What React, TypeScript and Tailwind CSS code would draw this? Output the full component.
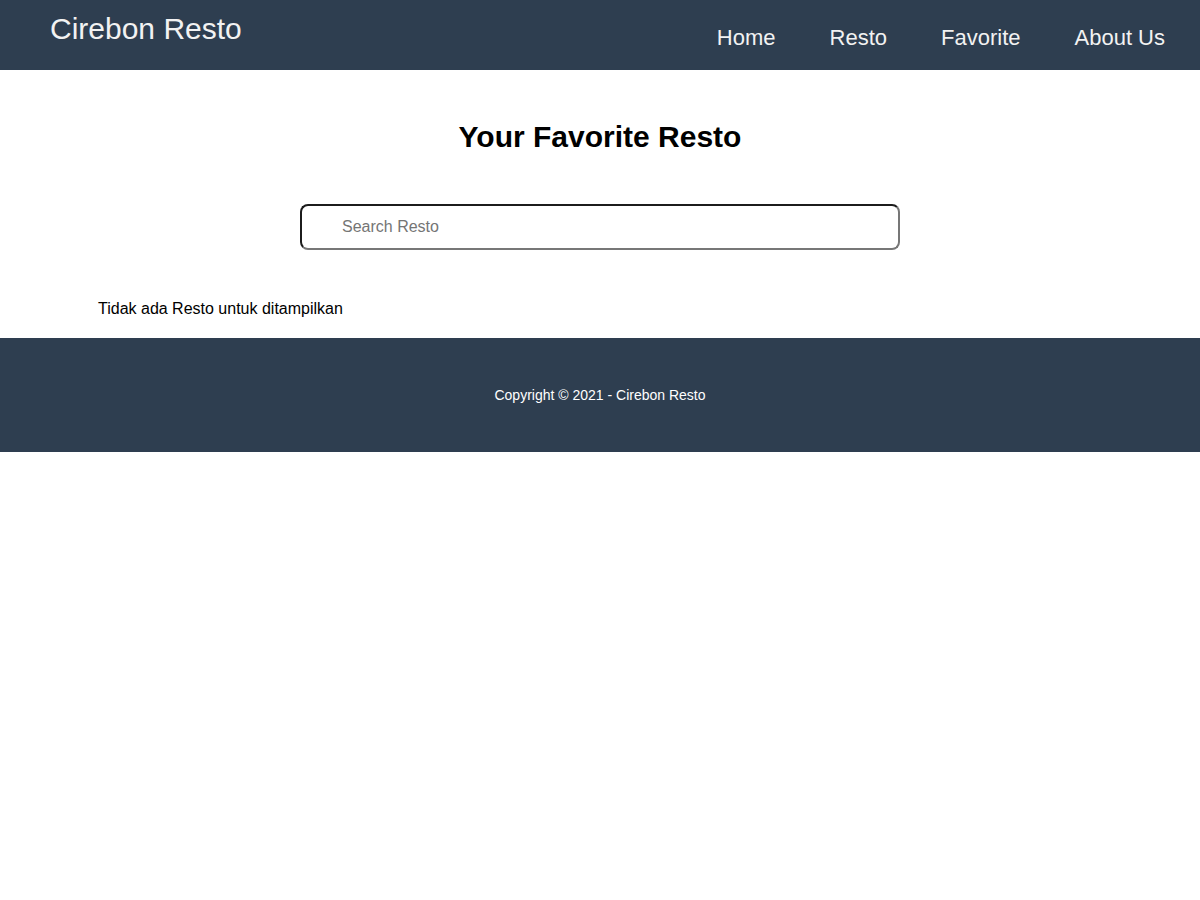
import React, { useState } from 'react';

const navLinks = ['Home', 'Resto', 'Favorite', 'About Us'];

export default function App() {
  const [query, setQuery] = useState('');

  return (
    <div className="min-h-screen bg-white font-['Liberation_Sans',Arial,sans-serif]">
      <header className="flex h-[70px] items-start justify-between bg-[#2e3e50] pl-[50px] pr-[35px]">
        <h1 className="pt-[12px] text-[30px] leading-[34px] font-normal text-[#f2f2f2]">Cirebon Resto</h1>
        <nav className="flex gap-[54px] pt-[25px]">
          {navLinks.map(link => (
            <a key={link} href="#" className="text-[22px] leading-[25px] text-[#f2f2f2]">
              {link}
            </a>
          ))}
        </nav>
      </header>

      <main className="pb-[20px]">
        <h2 className="pt-[50px] text-center text-[30px] leading-[34px] font-bold text-black">Your Favorite Resto</h2>

        <div className="mt-[50px] flex justify-center">
          <input
            type="text"
            value={query}
            onChange={e => setQuery(e.target.value)}
            placeholder="Search Resto"
            className="h-[46px] w-[600px] rounded-[8px] border-2 border-t-[#1c1c1c] border-l-[#1c1c1c] border-b-[#777777] border-r-[#777777] pl-[40px] text-[16px] text-black outline-none placeholder:text-[#757575]"
          />
        </div>

        <p className="mt-[50px] pl-[98px] text-[16px] leading-[18px] text-black">Tidak ada Resto untuk ditampilkan</p>
      </main>

      <footer className="flex h-[114px] items-center justify-center bg-[#2e3e50]">
        <p className="text-[14px] leading-[16px] text-white">Copyright © 2021 - Cirebon Resto</p>
      </footer>
    </div>
  );
}
